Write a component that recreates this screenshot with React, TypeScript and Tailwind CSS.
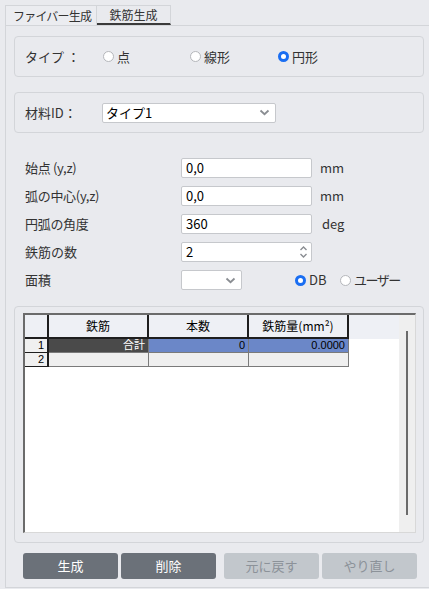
import React from 'react';

const font = { fontFamily: '"Noto Sans CJK JP", "Noto Sans", sans-serif' };
const numFont = { fontFamily: '"Liberation Sans", "Noto Sans CJK JP", sans-serif' };

const Radio: React.FC<{ label: string; checked?: boolean; className?: string; tight?: boolean }> = ({ label, checked, className, tight }) => (
    <label className={`flex items-center ${className ?? ''}`}>
        {checked ? (
            <span className="w-[11px] h-[11px] rounded-full border-[3px] border-[#1a6ef2] bg-white box-border"></span>
        ) : (
            <span className="w-[11px] h-[11px] rounded-full border border-[#b5b7bb] bg-white box-border"></span>
        )}
        <span className={`ml-[3px] text-[13px] text-[#333] ${tight ? 'tracking-[-1.5px]' : ''}`}>{label}</span>
    </label>
);

const Chevron: React.FC = () => (
    <svg width="11" height="7" viewBox="0 0 11 7" className="text-[#8a8d92]">
        <path d="M1.5 1.5 L5.5 5.2 L9.5 1.5" stroke="currentColor" strokeWidth="1.8" fill="none" />
    </svg>
);

const TextInput: React.FC<{ value: string }> = ({ value }) => (
    <div className="w-[131px] h-[20px] bg-white border border-[#c6c8cc] rounded-[2px] flex items-center px-[4px] text-[13px] text-black">
        {value}
    </div>
);

const App: React.FC = () => {
    const rows = [
        { label: '始点 (y,z)', value: '0,0', unit: 'mm' },
        { label: '弧の中心(y,z)', value: '0,0', unit: 'mm' },
        { label: '円弧の角度', value: '360', unit: 'deg' },
    ];

    const cell = 'flex items-center';

    return (
        <div className="w-[429px] h-[589px] bg-[#e9eaee] pt-[5px] pl-[5px] overflow-hidden" style={font}>
            {/* tabs */}
            <div className="flex h-[20px] text-[12px] text-[#333] whitespace-nowrap">
                <div className="w-[92px] border border-b-0 border-[#d3d5d9] flex items-center pl-[7px] bg-[#ebecf0] tracking-[-0.8px]">ファイバー生成</div>
                <div className="w-[74px] border-t border-r border-[#d3d5d9] border-b-2 border-b-[#3a3a3a] flex items-center justify-center">鉄筋生成</div>
            </div>

            {/* panel */}
            <div className="h-[563px] border-t border-l border-b border-[#d3d5d9] pl-[8px] pr-[5px] pt-[10px]">
                <div className="h-[41px] border border-[#d3d5d9] rounded-[4px] flex items-center pl-[10px]">
                    <span className="w-[78px] text-[13px] text-[#333]">タイプ ：</span>
                    <Radio label="点" className="w-[87px]" />
                    <Radio label="線形" className="w-[88px]" />
                    <Radio label="円形" checked />
                </div>

                <div className="mt-[15px] h-[41px] border border-[#d3d5d9] rounded-[4px] flex items-center pl-[10px]">
                    <span className="w-[77px] text-[13px] text-[#333]">材料ID：</span>
                    <div className="w-[174px] h-[20px] bg-white border border-[#c6c8cc] rounded-[2px] flex items-center justify-between pl-[3px] pr-[5px] text-[13px] text-black">
                        <span>タイプ1</span>
                        <Chevron />
                    </div>
                </div>

                <div className="mt-[25px] pl-[11px] flex flex-col gap-[8px]">
                    {rows.map(r => (
                        <div key={r.label} className="flex items-center h-[20px]">
                            <span className="w-[156px] text-[13px] text-[#333] tracking-[-0.3px]">{r.label}</span>
                            <TextInput value={r.value} />
                            <span className={`${r.unit === 'deg' ? 'ml-[10px]' : 'ml-[8px]'} text-[13px] text-[#333]`}>{r.unit}</span>
                        </div>
                    ))}
                    <div className="flex items-center h-[20px]">
                        <span className="w-[156px] text-[13px] text-[#333]">鉄筋の数</span>
                        <div className="w-[131px] h-[20px] bg-white border border-[#c6c8cc] rounded-[2px] flex items-center justify-between pl-[4px] pr-[3px] text-[13px] text-black">
                            <span>2</span>
                            <svg width="9" height="14" viewBox="0 0 9 14" className="text-[#8a8d92]">
                                <path d="M1.5 5 L4.5 2 L7.5 5" stroke="currentColor" strokeWidth="1.4" fill="none" />
                                <path d="M1.5 9 L4.5 12 L7.5 9" stroke="currentColor" strokeWidth="1.4" fill="none" />
                            </svg>
                        </div>
                    </div>
                    <div className="flex items-center h-[20px]">
                        <span className="w-[156px] text-[13px] text-[#333]">面積</span>
                        <div className="w-[61px] h-[20px] bg-white border border-[#c6c8cc] rounded-[2px] flex items-center justify-end pr-[5px]">
                            <Chevron />
                        </div>
                        <Radio label="DB" checked className="ml-[53px] w-[45px]" />
                        <Radio label="ユーザー" tight />
                    </div>
                </div>

                {/* table section */}
                <div className="mt-[16px] h-[237px] border border-[#d3d5d9] rounded-[4px] pt-[6px] pl-[8px] pr-[7px] pb-[9px]">
                    <div className="h-full bg-white border-t-2 border-l-2 border-[#6b6b6b] border-b border-r border-b-[#d8d8d8] border-r-[#d8d8d8] flex text-[12px] text-black">
                        <div className="flex-1">
                            <div className="flex h-[24px] bg-[#eef0f5]">
                                <div className="w-[24px] border-r-2 border-b-2 border-[#1e1e1e]"></div>
                                <div className="w-[100px] border-r-2 border-b-2 border-[#1e1e1e] flex items-center justify-center">鉄筋</div>
                                <div className="w-[100px] border-r-2 border-b-2 border-[#1e1e1e] flex items-center justify-center">本数</div>
                                <div className="w-[100px] border-r-2 border-b-2 border-[#1e1e1e] flex items-center justify-center">鉄筋量(mm²)</div>
                            </div>
                            <div className="flex h-[14px] leading-[11px] text-[11px]" style={numFont}>
                                <div className={`w-[24px] bg-[#f0f0f0] border-r-2 border-b border-[#1e1e1e] justify-end pr-[3px] ${cell}`}>1</div>
                                <div className={`w-[100px] bg-[#4a4a4a] text-white border-r border-b border-[#7a7a7a] justify-end pr-[3px] ${cell}`}>合計</div>
                                <div className={`w-[100px] bg-[#6b87c8] border-r border-b border-[#7a7a7a] justify-end pr-[3px] ${cell}`}>0</div>
                                <div className={`w-[100px] bg-[#6b87c8] border-r border-b border-[#7a7a7a] justify-end pr-[3px] ${cell}`}>0.0000</div>
                            </div>
                            <div className="flex h-[14px] leading-[11px] text-[11px]" style={numFont}>
                                <div className={`w-[24px] bg-[#f0f0f0] border-r-2 border-b border-[#1e1e1e] justify-end pr-[3px] ${cell}`}>2</div>
                                <div className="w-[100px] bg-[#efefef] border-r border-b border-[#7a7a7a]"></div>
                                <div className="w-[100px] bg-[#efefef] border-r border-b border-[#7a7a7a]"></div>
                                <div className="w-[100px] bg-[#efefef] border-r border-b border-[#7a7a7a]"></div>
                            </div>
                        </div>
                        <div className="w-[16px] bg-[#efefef] flex justify-center pt-[16px] pb-[16px]">
                            <div className="w-[2px] h-[184px] bg-[#6b6b6b]"></div>
                        </div>
                    </div>
                </div>

                {/* buttons */}
                <div className="mt-[10px] pl-[9px] flex text-[13px]">
                    <button className="w-[95px] h-[26px] rounded-[3px] bg-[#6b7179] text-white">生成</button>
                    <button className="ml-[3px] w-[95px] h-[26px] rounded-[3px] bg-[#6b7179] text-white">削除</button>
                    <button className="ml-[8px] w-[95px] h-[26px] rounded-[3px] bg-[#c2c7cc] text-[#8c9299]">元に戻す</button>
                    <button className="ml-[3px] w-[95px] h-[26px] rounded-[3px] bg-[#c2c7cc] text-[#8c9299]">やり直し</button>
                </div>
            </div>
        </div>
    );
};

export default App;
